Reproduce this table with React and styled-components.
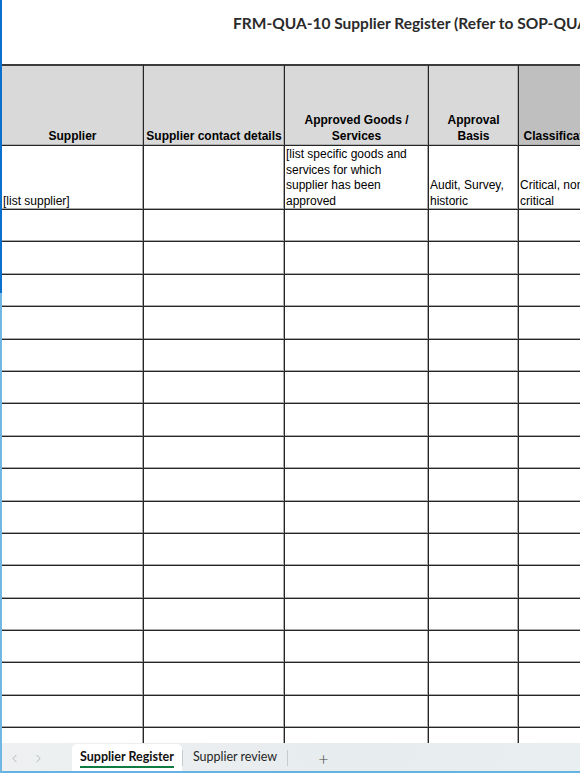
import React from "react";
import styled, { createGlobalStyle } from "styled-components";
import { ChevronLeft, ChevronRight } from "lucide-react";

const GlobalStyle = createGlobalStyle`
  html, body {
    margin: 0;
    padding: 0;
    background: #ffffff;
  }
`;

const Page = styled.div`
  width: 580px;
  height: 773px;
  display: flex;
  overflow: hidden;
  background: #ffffff;
`;

const Stripe = styled.div`
  width: 2px;
  flex: none;
  background: linear-gradient(#0a70cc 0, #0a70cc 293px, #72b7e4 293px, #72b7e4 100%);
`;

const Main = styled.div`
  flex: 1;
  min-width: 0;
  display: flex;
  flex-direction: column;
`;

const Sheet = styled.div`
  height: 743px;
  overflow: hidden;
  flex: none;
`;

const TitleRow = styled.div`
  height: 64px;
  padding-left: 231px;
  padding-top: 14px;
  box-sizing: border-box;
  font-family: Lato, "Open Sans", sans-serif;
  font-weight: 700;
  font-size: 15.5px;
  color: #2b2b2b;
  white-space: nowrap;
`;

const Grid = styled.div`
  display: grid;
  grid-template-columns: 142px 141px 144px 90px 88px;
  grid-template-rows: 82px 64px;
  grid-auto-rows: 32.4px;
  width: 605px;
`;

const Cell = styled.div`
  box-sizing: border-box;
  display: flex;
  flex-direction: column;
  justify-content: flex-end;
  align-items: ${(p) => (p.$head ? "center" : "flex-start")};
  text-align: ${(p) => (p.$head ? "center" : "left")};
  background: ${(p) => (p.$dark ? "#bfbfbf" : p.$head ? "#d9d9d9" : "#ffffff")};
  border-right: 1px solid #262626;
  border-bottom: 1px solid #262626;
  border-top: ${(p) => (p.$head ? "2px solid #3c3c3c" : "none")};
  box-shadow: inset -1px -1px 0 ${(p) => (p.$head ? "#b0b0b0" : "#a8a8a8")};
  font-family: "Liberation Sans", Arial, sans-serif;
  font-size: 12px;
  font-weight: ${(p) => (p.$head ? 700 : 400)};
  line-height: ${(p) => (p.$head ? "16px" : "15.4px")};
  color: #000000;
  padding: ${(p) => (p.$head ? "0 1px 1px" : "0 5px 0 1px")};
  white-space: ${(p) => (p.$nowrap ? "nowrap" : "normal")};
  overflow: hidden;
`;

const TabBar = styled.div`
  height: 28px;
  flex: none;
  display: flex;
  align-items: stretch;
  background: linear-gradient(90deg, #eef0f1, #e7ecee 60%, #e9eef0);
  font-family: Lato, "Open Sans", sans-serif;
  font-size: 12.5px;
  color: #222;
`;

const NavArrow = styled.span`
  width: 24px;
  display: flex;
  align-items: center;
  justify-content: center;
  color: #a4a8ac;
  padding-top: 2px;
`;

const Tab = styled.div`
  display: flex;
  align-items: center;
  padding: 2px ${(p) => (p.$active ? "8px" : "10px")} 0;
  margin-left: ${(p) => p.$offset || 0}px;
  margin-top: 1px;
  background: ${(p) => (p.$active ? "#ffffff" : "transparent")};
  border-radius: 5px 5px 0 0;
  font-weight: ${(p) => (p.$active ? 700 : 400)};
  color: ${(p) => (p.$active ? "#111" : "#262626")};
`;

const TabLabel = styled.span`
  padding-bottom: 1px;
  border-bottom: 2px solid ${(p) => (p.$active ? "#107c41" : "transparent")};
  line-height: 16px;
`;

const Divider = styled.span`
  width: 1px;
  margin: 7px 0 5px;
  background: #c8cbcd;
`;

const AddButton = styled.span`
  display: flex;
  align-items: center;
  margin-left: 30px;
  padding-top: 2px;
  font-size: 18px;
  font-weight: 300;
  color: #444;
`;

const BottomLine = styled.div`
  height: 2px;
  flex: none;
  background: #64b3e3;
`;

const headers = [
  { text: "Supplier", nowrap: true },
  { text: "Supplier contact details", nowrap: true },
  { text: "Approved Goods / Services" },
  { text: "Approval Basis" },
  { text: "Classification", nowrap: true, dark: true },
];

const firstRow = [
  "[list supplier]",
  "",
  "[list specific goods and services for which supplier has been approved",
  "Audit, Survey, historic",
  "Critical, non critical",
];

const EMPTY_ROWS = 17;

export default function App() {
  return (
    <>
      <GlobalStyle />
      <Page>
        <Stripe />
        <Main>
          <Sheet>
            <TitleRow>FRM-QUA-10 Supplier Register (Refer to SOP-QUA-10)</TitleRow>
            <Grid>
              {headers.map((h) => (
                <Cell key={h.text} $head $dark={h.dark} $nowrap={h.nowrap}>
                  {h.text}
                </Cell>
              ))}
              {firstRow.map((t, i) => (
                <Cell key={"r1-" + i}>{t}</Cell>
              ))}
              {Array.from({ length: EMPTY_ROWS * 5 }).map((_, i) => (
                <Cell key={"e-" + i} />
              ))}
            </Grid>
          </Sheet>
          <TabBar>
            <NavArrow>
              <ChevronLeft size={13} strokeWidth={1.5} />
            </NavArrow>
            <NavArrow>
              <ChevronRight size={13} strokeWidth={1.5} />
            </NavArrow>
            <Tab $active $offset={22}>
              <TabLabel $active>Supplier Register</TabLabel>
            </Tab>
            <Divider />
            <Tab>
              <TabLabel>Supplier review</TabLabel>
            </Tab>
            <Divider />
            <AddButton>+</AddButton>
          </TabBar>
          <BottomLine />
        </Main>
      </Page>
    </>
  );
}
